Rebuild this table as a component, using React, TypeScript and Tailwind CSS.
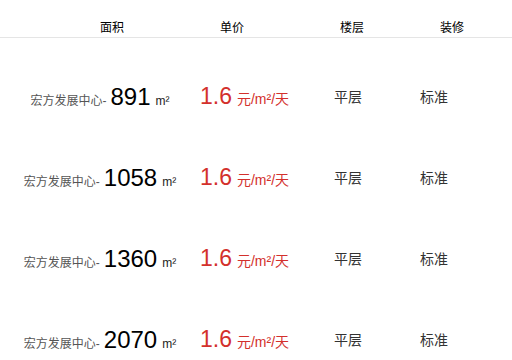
const rows = [
  { area: "891" },
  { area: "1058" },
  { area: "1360" },
  { area: "2070" },
];

function Row({ area }: { area: string }) {
  return (
    <div className="flex h-[81px] items-center">
      <div className="flex w-[200px] items-baseline justify-center">
        <span className="text-[12px] text-[#555]">宏方发展中心-</span>
        <span className="ml-[4px] text-[24px] leading-none text-black">{area}</span>
        <span className="ml-[5px] text-[12px] text-[#222]">m²</span>
      </div>
      <div className="flex w-[134px] items-baseline text-[#d3302c]">
        <span className="text-[23px] leading-none">1.6</span>
        <span className="ml-[5px] text-[14px]">元/m²/天</span>
      </div>
      <div className="w-[86px] text-[14px] text-[#333]">平层</div>
      <div className="text-[14px] text-[#333]">标准</div>
    </div>
  );
}

export default function App() {
  return (
    <div
      className="h-[360px] w-[512px] overflow-hidden bg-white"
      style={{ fontFamily: '"Liberation Sans", "Noto Sans CJK SC", sans-serif' }}
    >
      <div className="flex h-[38px] items-start border-b border-[#e5e5e5] pt-[22px] text-[12px] leading-[12px] text-black">
        <span className="ml-[100px]">面积</span>
        <span className="ml-[96px]">单价</span>
        <span className="ml-[96px]">楼层</span>
        <span className="ml-[76px]">装修</span>
      </div>
      <div className="pt-[19px]">
        {rows.map((r) => (
          <Row key={r.area} area={r.area} />
        ))}
      </div>
    </div>
  );
}
